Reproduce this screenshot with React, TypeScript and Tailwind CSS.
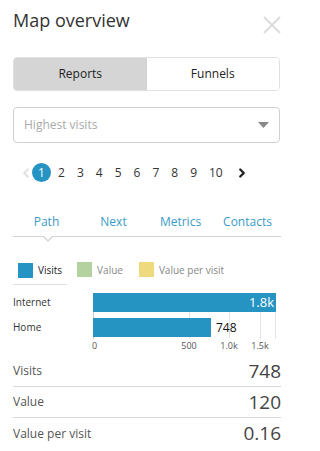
import { ChevronLeft, ChevronRight } from "lucide-react";

const pages = ["2", "3", "4", "5", "6", "7", "8", "9", "10"];
const tabs = ["Path", "Next", "Metrics", "Contacts"];
const stats = [
  { label: "Visits", value: "748" },
  { label: "Value", value: "120" },
  { label: "Value per visit", value: "0.16" },
];

export default function App() {
  return (
    <div className="w-[294px] h-[451px] bg-white px-[13px] text-[#333] font-['Open_Sans',sans-serif] overflow-hidden">
      {/* Header */}
      <div className="flex items-start justify-between pt-[6px]">
        <h1 className="text-[18px] leading-[28px] text-[#333]">Map overview</h1>
        <svg className="mt-[10px] w-[18px] h-[18px]" viewBox="0 0 18 18" fill="none" stroke="#dcdcdc" strokeWidth="2">
          <path d="M1 1 L17 17 M17 1 L1 17" />
        </svg>
      </div>

      {/* Reports / Funnels */}
      <div className="mt-[23px] flex h-[34px] w-[267px] rounded-[4px] border border-[#e0e0e0] overflow-hidden text-[12px] text-[#222]">
        <div className="flex-1 flex items-center justify-center bg-[#d5d5d5]">Reports</div>
        <div className="flex-1 flex items-center justify-center bg-white">Funnels</div>
      </div>

      {/* Select */}
      <div className="mt-[16px] flex h-[36px] w-[267px] items-center justify-between rounded-[4px] border border-[#d0d0d0] pl-[10px] pr-[10px]">
        <span className="text-[12px] text-[#aaa]">Highest visits</span>
        <svg width="11" height="6" viewBox="0 0 11 6">
          <path d="M0 0 L11 0 L5.5 6 Z" fill="#888" />
        </svg>
      </div>

      {/* Pagination */}
      <div className="mt-[20px] flex items-center pl-[6px] text-[12px] text-[#333]">
        <ChevronLeft className="w-[14px] h-[14px] text-[#e2e2e2]" strokeWidth={4} />
        <span className="ml-[-1px] flex h-[19px] w-[19px] items-center justify-center rounded-full bg-[#2694c3] text-white">1</span>
        <div className="ml-[7px] flex items-center gap-[12px]">
          {pages.map((p) => (
            <span key={p}>{p}</span>
          ))}
        </div>
        <ChevronRight className="ml-[12px] w-[14px] h-[14px] text-[#222]" strokeWidth={4} />
      </div>

      {/* Tabs */}
      <div className="mt-[30px] relative grid grid-cols-4 border-b border-[#d4d4d4] pb-[4px] text-[12px] leading-[20px] text-[#3a9bc8]">
        {tabs.map((t) => (
          <div key={t} className="text-center">{t}</div>
        ))}
        <div className="absolute left-[29px] bottom-[-6px] h-0 w-0 border-x-[6px] border-t-[6px] border-x-transparent border-t-[#d4d4d4]" />
        <div className="absolute left-[30px] bottom-[-4px] h-0 w-0 border-x-[5px] border-t-[5px] border-x-transparent border-t-white" />
      </div>

      {/* Legend */}
      <div className="mt-[22px] flex items-center text-[10px] leading-[16px]">
        <div className="flex items-center border-b border-[#ddd] pb-[6px] pl-[5px] pr-[5px] translate-y-[3px]">
          <span className="h-[15px] w-[15px] bg-[#2694c3]" />
          <span className="ml-[5px] text-[#222]">Visits</span>
        </div>
        <span className="ml-[10px] h-[15px] w-[15px] bg-[#b4d1a0] -translate-y-[1px]" />
        <span className="ml-[5px] text-[#888] -translate-y-[1px]">Value</span>
        <span className="ml-[16px] h-[15px] w-[15px] bg-[#eed97f] -translate-y-[1px]" />
        <span className="ml-[5px] text-[#888] -translate-y-[1px]">Value per visit</span>
      </div>

      {/* Chart */}
      <div className="mt-[11px] flex text-[10px] text-[#333]">
        <div className="w-[80px] flex flex-col gap-[6px]">
          <div className="h-[19px] flex items-center">Internet</div>
          <div className="h-[19px] flex items-center">Home</div>
        </div>
        <div className="relative w-[184px]">
          <div className="absolute left-0 top-0 h-[46px] w-px bg-[#ccc]" />
          <div className="absolute left-[96px] top-0 h-[46px] w-px bg-[#e4e4e4]" />
          <div className="absolute left-[136px] top-0 h-[46px] w-px bg-[#e4e4e4]" />
          <div className="absolute left-[167px] top-0 h-[46px] w-px bg-[#e4e4e4]" />
          <div className="absolute left-[182px] top-0 h-[46px] w-px bg-[#e4e4e4]" />
          <div className="relative flex flex-col gap-[6px]">
            <div className="h-[19px] w-[183px] bg-[#2694c3] flex items-center justify-end pr-[2px] text-[13px] text-white">1.8k</div>
            <div className="flex items-center">
              <div className="h-[19px] w-[118px] bg-[#2694c3]" />
              <span className="ml-[5px] text-[12px] text-[#111]">748</span>
            </div>
          </div>
          <div className="relative h-[16px] mt-[2px] text-[9px] leading-[14px] text-[#555]">
            <span className="absolute left-[-1px] top-0">0</span>
            <span className="absolute left-[96px] top-0 -translate-x-1/2">500</span>
            <span className="absolute left-[136px] top-0 -translate-x-1/2">1.0k</span>
            <span className="absolute left-[167px] top-0 -translate-x-1/2">1.5k</span>
          </div>
        </div>
      </div>

      {/* Stats */}
      <div className="mt-[1px] w-[268px]">
        {stats.map((s, i) => (
          <div
            key={s.label}
            className={`flex items-center justify-between h-[31px] ${i < stats.length - 1 ? "border-b border-[#d8d8d8]" : ""}`}
          >
            <span className="text-[12px] text-[#555]">{s.label}</span>
            <span className="text-[19px] text-[#444]">{s.value}</span>
          </div>
        ))}
      </div>
    </div>
  );
}
